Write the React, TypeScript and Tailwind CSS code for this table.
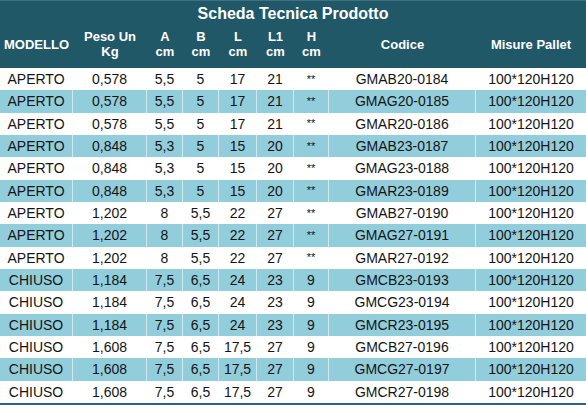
import React from "react";

const rows: string[][] = [
  ["APERTO", "0,578", "5,5", "5", "17", "21", "**", "GMAB20-0184"],
  ["APERTO", "0,578", "5,5", "5", "17", "21", "**", "GMAG20-0185"],
  ["APERTO", "0,578", "5,5", "5", "17", "21", "**", "GMAR20-0186"],
  ["APERTO", "0,848", "5,3", "5", "15", "20", "**", "GMAB23-0187"],
  ["APERTO", "0,848", "5,3", "5", "15", "20", "**", "GMAG23-0188"],
  ["APERTO", "0,848", "5,3", "5", "15", "20", "**", "GMAR23-0189"],
  ["APERTO", "1,202", "8", "5,5", "22", "27", "**", "GMAB27-0190"],
  ["APERTO", "1,202", "8", "5,5", "22", "27", "**", "GMAG27-0191"],
  ["APERTO", "1,202", "8", "5,5", "22", "27", "**", "GMAR27-0192"],
  ["CHIUSO", "1,184", "7,5", "6,5", "24", "23", "9", "GMCB23-0193"],
  ["CHIUSO", "1,184", "7,5", "6,5", "24", "23", "9", "GMCG23-0194"],
  ["CHIUSO", "1,184", "7,5", "6,5", "24", "23", "9", "GMCR23-0195"],
  ["CHIUSO", "1,608", "7,5", "6,5", "17,5", "27", "9", "GMCB27-0196"],
  ["CHIUSO", "1,608", "7,5", "6,5", "17,5", "27", "9", "GMCG27-0197"],
  ["CHIUSO", "1,608", "7,5", "6,5", "17,5", "27", "9", "GMCR27-0198"],
];

const headers: string[][] = [
  ["MODELLO"],
  ["Peso Un", "Kg"],
  ["A", "cm"],
  ["B", "cm"],
  ["L", "cm"],
  ["L1", "cm"],
  ["H", "cm"],
  ["Codice"],
  ["Misure Pallet"],
];

const grid =
  "grid grid-cols-[73px_74px_36px_36px_38px_37px_35px_147px_110px]";

export default function App() {
  return (
    <div
      className="w-[586px] h-[405px] overflow-hidden bg-white"
      style={{ fontFamily: '"Liberation Sans", Arial, sans-serif' }}
    >
      <div className="bg-[#215868] border-t border-[#3d7282] text-white font-bold">
        <div className="h-[26px] flex items-center justify-center text-[16px] leading-none">
          Scheda Tecnica Prodotto
        </div>
        <div className={`${grid} h-[41px]`}>
          {headers.map((h, i) => (
            <div
              key={i}
              className="flex flex-col items-center justify-center pb-[7px] text-[13px] leading-[15px] text-center"
            >
              {h.map((t, j) => (
                <span key={j} className="whitespace-nowrap">
                  {t}
                </span>
              ))}
            </div>
          ))}
        </div>
      </div>
      <div className="border-b-2 border-[#2f6474]">
        {rows.map((r, i) => {
          const blue = i % 2 === 1;
          return (
            <div
              key={i}
              className={`${grid} h-[22.33px] text-[14px] leading-none text-[#141414] ${
                blue ? "bg-[#92cddc]" : "bg-white"
              }`}
            >
              {[...r, "100*120H120"].map((c, j) => (
                <div
                  key={j}
                  className={`flex items-center justify-center whitespace-nowrap ${
                    j < 8
                      ? blue
                        ? "border-r border-[#cfe9f0]"
                        : "border-r border-white"
                      : ""
                  } ${c === "**" ? "text-[11px]" : ""}`}
                >
                  {c}
                </div>
              ))}
            </div>
          );
        })}
      </div>
    </div>
  );
}
